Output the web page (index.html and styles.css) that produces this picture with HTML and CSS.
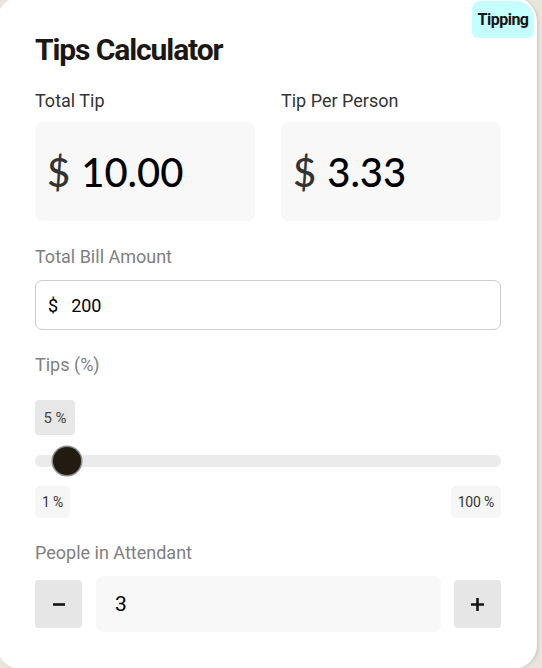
FILE: index.html
```html
<!DOCTYPE html>
<html lang="en">
<head>
<meta charset="utf-8">
<title>Tips Calculator</title>
<link rel="stylesheet" href="styles.css">
</head>
<body>
<div class="card">
  <span class="badge">Tipping</span>
  <h1 class="title">Tips Calculator</h1>

  <div class="results">
    <div class="result">
      <div class="label">Total Tip</div>
      <div class="amount"><span class="cur">$</span><span class="val">10.00</span></div>
    </div>
    <div class="result">
      <div class="label">Tip Per Person</div>
      <div class="amount"><span class="cur">$</span><span class="val">3.33</span></div>
    </div>
  </div>

  <div class="label muted gap-bill">Total Bill Amount</div>
  <div class="bill"><span class="bill-cur">$</span><span class="bill-val">200</span></div>

  <div class="label muted gap-tips">Tips (%)</div>
  <div class="pct-current">5 %</div>
  <input class="slider" type="range" min="1" max="100" value="5">
  <div class="range-ends">
    <span class="pct-end">1 %</span>
    <span class="pct-end">100 %</span>
  </div>

  <div class="label muted gap-people">People in Attendant</div>
  <div class="people">
    <button class="step" type="button" aria-label="decrease">
      <svg width="12" height="12" viewBox="0 0 12 12"><path d="M0 6.5H12" stroke="#141414" stroke-width="2.6"/></svg>
    </button>
    <div class="count">3</div>
    <button class="step" type="button" aria-label="increase">
      <svg width="13" height="13" viewBox="0 0 13 13"><path d="M0 6.5H13M6.5 0V13" stroke="#141414" stroke-width="2.6"/></svg>
    </button>
  </div>
</div>
</body>
</html>
```

FILE: styles.css
```css
* { box-sizing: border-box; }

html, body {
  margin: 0;
  padding: 0;
  background: #e8e5dc;
  overflow: hidden;
}

body {
  font-family: Roboto, "Liberation Sans", sans-serif;
  color: #333;
}

.card {
  position: relative;
  width: 540px;
  height: 672px;
  margin: -3px 0 0 -3px;
  padding: 35px 36px 0 38px;
  background: #fff;
  border-radius: 24px;
  box-shadow: 1px 0 0 #d2cec5, 2px 1px 3px rgba(0, 0, 0, 0.08);
}

.badge {
  position: absolute;
  top: 4px;
  right: 3px;
  width: 62px;
  height: 37px;
  display: flex;
  align-items: center;
  justify-content: center;
  background: #c6ffff;
  border-radius: 8px 18px 6px 6px;
  font-weight: 700;
  font-size: 16px;
  letter-spacing: -0.5px;
  color: #151515;
}

.title {
  margin: 0;
  font-size: 30px;
  line-height: 36px;
  font-weight: 700;
  letter-spacing: -1.1px;
  color: #1a1714;
}

.label {
  font-size: 18px;
  line-height: 22px;
  color: #333;
}

.muted { color: #808080; }

.results {
  margin-top: 22px;
  display: grid;
  grid-template-columns: 220px 220px;
  column-gap: 26px;
}

.result .label { margin-bottom: 10px; }

.amount {
  height: 99px;
  padding: 30px 0 0 12px;
  background: #f8f8f8;
  border-radius: 7px;
  font-family: Lato, "Open Sans", sans-serif;
  font-weight: 500;
  font-size: 40px;
  line-height: 40px;
  display: flex;
  gap: 11px;
}

.cur { color: #333; }
.val { color: #000; }

.gap-bill { margin-top: 25px; }

.bill {
  margin-top: 12px;
  height: 50px;
  border: 1px solid #cdcdcd;
  border-radius: 7px;
  padding-left: 12px;
  display: flex;
  align-items: center;
  gap: 13px;
  font-size: 18px;
  color: #000;
}

.gap-tips { margin-top: 24px; }

.pct-current {
  margin-top: 24px;
  width: 40px;
  height: 35px;
  display: flex;
  align-items: center;
  justify-content: center;
  background: #e7e7e7;
  border-radius: 4px;
  font-size: 15px;
  color: #444;
}

.slider {
  -webkit-appearance: none;
  appearance: none;
  display: block;
  width: 466px;
  height: 12px;
  margin: 20px 0 0 0;
  padding: 0;
  background: #ebebeb;
  border-radius: 6px;
  outline: none;
}

.slider::-webkit-slider-thumb {
  -webkit-appearance: none;
  appearance: none;
  width: 28px;
  height: 28px;
  border-radius: 50%;
  background: #221b12;
  box-shadow: 0 0 0 1.5px #8d8d8d;
  border: none;
}

.range-ends {
  margin-top: 19px;
  display: flex;
  justify-content: space-between;
}

.pct-end {
  height: 32px;
  padding: 0 7px;
  display: flex;
  align-items: center;
  background: #f6f6f6;
  border-radius: 5px;
  font-size: 14px;
  letter-spacing: -0.2px;
  color: #333;
}

.gap-people { margin-top: 24px; }

.people {
  margin-top: 12px;
  display: flex;
  align-items: center;
  gap: 13px;
}

.step {
  width: 47px;
  height: 48px;
  border: none;
  padding: 0;
  border-radius: 4px;
  background: #e6e6e6;
  display: flex;
  align-items: center;
  justify-content: center;
}

.count {
  flex: 1;
  height: 56px;
  margin: 0 0 0 1px;
  padding-left: 19px;
  display: flex;
  align-items: center;
  background: #f8f8f8;
  border-radius: 7px;
  font-size: 21px;
  color: #000;
}
```
